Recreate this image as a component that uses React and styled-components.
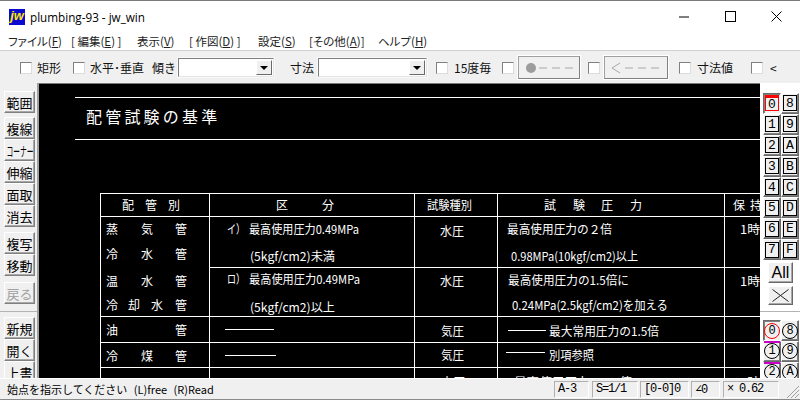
import styled, { createGlobalStyle } from 'styled-components'

const GlobalStyle = createGlobalStyle`
  html, body { margin: 0; padding: 0; background: #f0f0f0; }
  * { box-sizing: border-box; }
`

const UI_FONT = `'Noto Sans CJK JP', 'Noto Sans', sans-serif`

const menus = [
  ['ファイル(', 'F', ')', 63],
  ['[ 編集(', 'E', ') ]', 66],
  ['表示(', 'V', ')', 52],
  ['[ 作図(', 'D', ') ]', 69],
  ['設定(', 'S', ')', 51],
  ['[その他(', 'A', ')]', 69],
  ['ヘルプ(', 'H', ')', 50],
]

const leftGroups = [
  { gap: 4, items: ['範囲'] },
  { gap: 5, items: ['複線', 'コーナー', '伸縮', '面取', '消去'] },
  { gap: 6, items: ['複写', '移動'] },
  { gap: 7, items: [{ label: '戻る', off: true }] },
]

const layerRows = [['0', '8'], ['1', '9'], ['2', 'A'], ['3', 'B'], ['4', 'C'], ['5', 'D'], ['6', 'E'], ['7', 'F']]
const groupRows = [['0', '8'], ['1', '9'], ['2', 'A']]

const statusCells = [
  ['A-3', 35, 0],
  ['S=1/1', 46, 3],
  ['[0-0]0', 49, 2],
  ['∠0', 29, 2],
  ['× 0.62', 56, 3],
]

// drawing data, page coordinates
const hLines = [
  [75, 760, 97], [75, 760, 139],
  [100, 760, 193], [100, 760, 216], [209, 760, 267], [100, 760, 316], [100, 760, 342], [100, 760, 367],
  [225, 274, 329], [225, 276, 355], [508, 546, 330], [506, 545, 352],
]
const vLines = [100, 209, 414, 497, 724]

const labels = [
  [122, 205, '配'], [145, 205, '管'], [168, 205, '別'],
  [106, 229, '蒸'], [141, 229, '気'], [175, 229, '管'],
  [106, 254, '冷'], [141, 254, '水'], [175, 254, '管'],
  [106, 281, '温'], [141, 281, '水'], [175, 281, '管'],
  [106, 305, '冷'], [128, 305, '却'], [151, 305, '水'], [175, 305, '管'],
  [106, 330, '油'], [175, 330, '管'],
  [106, 356, '冷'], [141, 356, '煤'], [175, 356, '管'],
  [276, 205, '区'], [322, 205, '分'],
  [227, 229, 'イ）', 18], [249, 229, '最高使用圧力0.49MPa', 110],
  [250, 256, '(5kgf/cm2)未満', 85],
  [227, 279, 'ロ）', 18], [249, 279, '最高使用圧力0.49MPa', 111],
  [250, 307, '(5kgf/cm2)以上', 85],
  [427, 205, '試験種別', 45],
  [440, 231, '水圧', 24], [440, 281, '水圧', 24], [441, 331, '気圧', 23], [441, 355, '気圧', 23],
  [544, 205, '試'], [573, 205, '験'], [601, 205, '圧'], [630, 205, '力'],
  [507, 229, '最高使用圧力の２倍', 105],
  [511, 256, '0.98MPa(10kgf/cm2)以上', 127],
  [508, 280, '最高使用圧力の1.5倍に', 121],
  [512, 305, '0.24MPa(2.5kgf/cm2)を加える', 156],
  [549, 331, '最大常用圧力の1.5倍', 110],
  [549, 355, '別項参照', 45],
  [733, 205, '保'], [750, 205, '持'],
  [740, 229, '1時', 20], [740, 281, '1時', 20],
  [441, 382, '水圧', 24], [514, 382, '最高使用圧力の1.5倍', 118], [740, 382, '1時', 20],
]

const Window = styled.div`
  width: 800px;
  height: 400px;
  display: flex;
  flex-direction: column;
  overflow: hidden;
  background: #f0f0f0;
  border-top: 1px solid #7a7a7a;
  font-family: ${UI_FONT};
  color: #000;
`

const TitleBar = styled.div`
  height: 31px;
  flex: none;
  display: flex;
  align-items: center;
  padding: 0 1px 0 9px;
  background: #fff;
`

const AppIcon = styled.span`
  width: 16px;
  height: 16px;
  flex: none;
  margin-right: 5px;
  background: #0a0ad0;
  color: #ffe600;
  font: italic bold 13px/14px 'Liberation Sans', sans-serif;
  text-align: center;
`

const TitleText = styled.span`
  flex: 1;
  font: 11.7px 'Open Sans', sans-serif;
`

const WinButton = styled.span`
  width: 46px;
  height: 31px;
  display: flex;
  align-items: center;
  justify-content: center;
`

const MenuBar = styled.div`
  height: 19px;
  flex: none;
  display: flex;
  align-items: center;
  padding-left: 8px;
  background: #fff;
  border-bottom: 1px solid #d0d0d0;
`

const MenuItem = styled.span`
  width: ${({ $w }) => $w}px;
  flex: none;
  font-size: 11.5px;
  font-feature-settings: 'palt';
  white-space: nowrap;
  color: #222;
  u { text-underline-offset: 1px; }
`

const ToolBar = styled.div`
  height: 32px;
  flex: none;
  display: flex;
  align-items: center;
  padding: 1px 0 0 20px;
  background: #f0f0f0;
`

const Check = styled.span`
  width: 12px;
  height: 12px;
  flex: none;
  margin-left: ${({ $ml }) => $ml || 0}px;
  background: #fff;
  border: 1px solid;
  border-color: #808080 #dcdcdc #dcdcdc #808080;
`

const ToolLabel = styled.span`
  flex: none;
  width: ${({ $w }) => $w}px;
  margin-left: ${({ $ml }) => $ml || 0}px;
  font-size: 12px;
  line-height: 16px;
  white-space: nowrap;
  color: #111;
`

const Combo = styled.span`
  width: ${({ $w }) => $w}px;
  height: 19px;
  flex: none;
  margin-left: ${({ $ml }) => $ml || 0}px;
  display: flex;
  justify-content: flex-end;
  padding: 1px;
  background: #fff;
  border: 1px solid;
  border-color: #808080 #e4e4e4 #e4e4e4 #808080;
  outline: 1px solid #f8f8f8;
`

const ComboArrow = styled.span`
  width: 16px;
  display: flex;
  align-items: center;
  justify-content: center;
  background: #f0f0f0;
  border: 1px solid;
  border-color: #fff #696969 #696969 #fff;
  &::after {
    content: '';
    border: 4px solid transparent;
    border-top: 4px solid #000;
    border-bottom: 0;
  }
`

const LineButton = styled.span`
  width: ${({ $w }) => $w}px;
  height: 23px;
  flex: none;
  margin-left: ${({ $ml }) => $ml || 0}px;
  display: flex;
  align-items: center;
  padding-left: 6px;
  background: #f0f0f0;
  border: 1px solid;
  border-color: #a0a0a0 #808080 #808080 #a0a0a0;
  outline: 1px solid #fff;
`

const Body = styled.div`
  height: 295px;
  flex: none;
  display: flex;
`

const LeftPanel = styled.div`
  width: 39px;
  flex: none;
  padding: 8px 0 0 4px;
  overflow: hidden;
  background: #f0f0f0;
  border-right: 2px solid #a0a0a0;
`

const ToolGroup = styled.div`
  display: flex;
  flex-direction: column;
  margin-bottom: ${({ $gap }) => $gap}px;
`

const Separator = styled.div`
  height: 1px;
  background: #b4b4b4;
  margin: ${({ $m }) => $m};
`

const SideButton = styled.span`
  width: 31px;
  height: 22px;
  flex: none;
  display: flex;
  align-items: center;
  justify-content: center;
  background: #f0f0f0;
  border: 1px solid;
  border-color: #fff #808080 #808080 #fff;
  box-shadow: inset -1px -1px 0 #a8a8a8;
  font-size: 13px;
  white-space: nowrap;
  color: ${({ $off }) => ($off ? '#a0a0a0' : '#000')};
`

const NarrowLabel = styled.span`
  display: inline-block;
  transform: scaleX(0.52);
`

const CanvasFrame = styled.div`
  width: 721px;
  flex: none;
  border-top: 1px solid #7a7a7a;
`

const Canvas = styled.svg`
  width: 721px;
  height: 294px;
  display: block;
  background: #000;
`

const DrawText = styled.text`
  font-family: ${UI_FONT};
  font-size: 12px;
  fill: #fff;
`

const TitleDrawText = styled(DrawText)`
  font-size: 16px;
  letter-spacing: 3.2px;
`

const RightPanel = styled.div`
  width: 40px;
  flex: none;
  padding: 10px 0 0 3px;
  overflow: hidden;
  background: #fff;
`

const LayerGrid = styled.div`
  display: grid;
  grid-template-columns: 18px 18px;
  grid-auto-rows: 20.9px;
`

const LayerCell = styled.span`
  position: relative;
  display: flex;
  align-items: center;
  justify-content: center;
  border: 1px solid;
  border-color: ${({ $on }) => ($on ? '#696969 #fff #fff #696969' : '#fff #696969 #696969 #fff')};
  box-shadow: ${({ $on }) => ($on ? 'inset 1px 1px 0 #808080' : 'inset -1px -1px 0 #808080')};
  background: #f0f0f0;
`

const LayerBox = styled.span`
  width: 14px;
  height: 16px;
  display: flex;
  align-items: center;
  justify-content: center;
  border: 1px solid ${({ $on }) => ($on ? '#f00' : '#000')};
  border-top: ${({ $on }) => ($on ? '3px solid #f00' : '1px solid #000')};
  font: 13px/1 'Liberation Mono', monospace;
`

const GroupCircle = styled.span`
  width: 16px;
  height: 16px;
  display: flex;
  align-items: center;
  justify-content: center;
  border: 1px solid ${({ $on }) => ($on ? '#f00' : '#000')};
  border-radius: 50%;
  font: 12px/1 'Liberation Mono', monospace;
`

const MagentaBar = styled.span`
  position: absolute;
  top: -1px;
  left: 0;
  right: 0;
  height: 2px;
  background: #c800c8;
`

const AllButton = styled.span`
  width: 25px;
  height: ${({ $h }) => $h}px;
  margin: ${({ $mt }) => $mt}px 0 0 5px;
  display: flex;
  align-items: center;
  justify-content: center;
  background: #f0f0f0;
  border: 1px solid;
  border-color: #fff #696969 #696969 #fff;
  box-shadow: inset -1px -1px 0 #a8a8a8;
  font: 16px 'Liberation Sans', sans-serif;
`

const StatusBar = styled.div`
  height: 22px;
  flex: none;
  display: flex;
  align-items: center;
  background: #f0f0f0;
  border-top: 1px solid #fff;
  border-bottom: 1px solid #8a8a8a;
  font-size: 11px;
`

const StatusText = styled.span`
  flex: 1;
  padding-left: 7px;
  white-space: nowrap;
  word-spacing: 4px;
`

const StatusCell = styled.span`
  width: ${({ $w }) => $w}px;
  height: 17px;
  flex: none;
  margin-left: ${({ $ml }) => $ml}px;
  padding-left: 3px;
  display: flex;
  align-items: center;
  border: 1px solid;
  border-color: #b0b0b0 #fff #fff #b0b0b0;
  font: 12px 'Liberation Mono', monospace;
  letter-spacing: -1.2px;
  white-space: nowrap;
`

const Grip = styled.svg`
  width: 21px;
  height: 18px;
  flex: none;
`

const DrawLabel = ({ x, y, text, w }) => (
  <DrawText x={x} y={y + 5} {...(w ? { textLength: w, lengthAdjust: 'spacingAndGlyphs' } : {})}>
    {text}
  </DrawText>
)

const App = () => (
  <Window>
    <GlobalStyle />
    <TitleBar>
      <AppIcon>jw</AppIcon>
      <TitleText>plumbing-93 - jw_win</TitleText>
      <WinButton>
        <svg width="10" height="10" viewBox="0 0 10 10"><path d="M0 5h10" stroke="#000" /></svg>
      </WinButton>
      <WinButton>
        <svg width="11" height="11" viewBox="0 0 11 11"><rect x=".5" y=".5" width="10" height="10" fill="none" stroke="#000" /></svg>
      </WinButton>
      <WinButton>
        <svg width="11" height="11" viewBox="0 0 11 11"><path d="M.5.5l10 10M10.5.5l-10 10" stroke="#000" /></svg>
      </WinButton>
    </TitleBar>

    <MenuBar>
      {menus.map(([before, key, after, w]) => (
        <MenuItem key={key} $w={w}>{before}<u>{key}</u>{after}</MenuItem>
      ))}
    </MenuBar>

    <ToolBar>
      <Check />
      <ToolLabel $ml={5} $w={36}>矩形</ToolLabel>
      <Check />
      <ToolLabel $ml={5} $w={62}>水平･垂直</ToolLabel>
      <ToolLabel $w={26}>傾き</ToolLabel>
      <Combo $w={96}><ComboArrow /></Combo>
      <ToolLabel $ml={16} $w={28}>寸法</ToolLabel>
      <Combo $w={109}><ComboArrow /></Combo>
      <Check $ml={9} />
      <ToolLabel $ml={6} $w={48}>15度毎</ToolLabel>
      <Check />
      <LineButton $ml={4} $w={62}>
        <svg width="50" height="12" viewBox="0 0 50 12">
          <circle cx="6" cy="6" r="5" fill="#9c9c9c" />
          <path d="M14 6h8M27 6h8M40 6h8" stroke="#a8a8a8" />
        </svg>
      </LineButton>
      <Check $ml={8} />
      <LineButton $ml={4} $w={64}>
        <svg width="50" height="12" viewBox="0 0 50 12">
          <path d="M9 1L1 6l8 5M14 6h8M27 6h8M40 6h8" fill="none" stroke="#a8a8a8" />
        </svg>
      </LineButton>
      <Check $ml={11} />
      <ToolLabel $ml={6} $w={54}>寸法値</ToolLabel>
      <Check />
      <ToolLabel $ml={7} $w={12}>&lt;</ToolLabel>
    </ToolBar>

    <Body>
      <LeftPanel>
        {leftGroups.map((group, i) => (
          <ToolGroup key={i} $gap={group.gap}>
            {group.items.map((item) => {
              const label = item.label || item
              return (
                <SideButton key={label} $off={item.off}>
                  {label === 'コーナー' ? <NarrowLabel>{label}</NarrowLabel> : label}
                </SideButton>
              )
            })}
          </ToolGroup>
        ))}
        <Separator $m="0 0 5px -4px" />
        <ToolGroup $gap={0}>
          <SideButton>新規</SideButton>
          <SideButton>開く</SideButton>
          <SideButton>上書</SideButton>
        </ToolGroup>
      </LeftPanel>

      <CanvasFrame>
        <Canvas viewBox="39 84 721 294">
          {hLines.map(([x1, x2, y]) => (
            <line key={`${x1}-${y}`} x1={x1} x2={x2} y1={y + 0.5} y2={y + 0.5} stroke="#fff" />
          ))}
          {vLines.map((x) => (
            <line key={x} x1={x + 0.5} x2={x + 0.5} y1={193} y2={378} stroke="#fff" />
          ))}
          <TitleDrawText x={86} y={123}>配管試験の基準</TitleDrawText>
          {labels.map(([x, y, text, w]) => (
            <DrawLabel key={`${x}-${y}`} x={x} y={y} text={text} w={w} />
          ))}
        </Canvas>
      </CanvasFrame>

      <RightPanel>
        <LayerGrid>
          {layerRows.map((row) => row.map((label) => (
            <LayerCell key={label} $on={label === '0'}>
              <LayerBox $on={label === '0'}>{label}</LayerBox>
            </LayerCell>
          )))}
        </LayerGrid>
        <AllButton $h={21} $mt={2}>All</AllButton>
        <AllButton $h={19} $mt={3}>
          <svg width="17" height="13" viewBox="0 0 17 13"><path d="M.5.5l16 12M16.5.5l-16 12" stroke="#222" /></svg>
        </AllButton>
        <Separator $m="6px 0 8px -3px" />
        <LayerGrid>
          {groupRows.map((row) => row.map((label) => (
            <LayerCell key={label} $on={label === '0'}>
              {(label === '1' || label === '2') && <MagentaBar />}
              <GroupCircle $on={label === '0'}>{label}</GroupCircle>
            </LayerCell>
          )))}
        </LayerGrid>
      </RightPanel>
    </Body>

    <StatusBar>
      <StatusText>始点を指示してください (L)free (R)Read</StatusText>
      {statusCells.map(([text, w, ml]) => (
        <StatusCell key={text} $w={w} $ml={ml}>{text}</StatusCell>
      ))}
      <Grip viewBox="0 0 21 18">
        <path d="M20 6L8 18M20 10l-8 8M20 14l-4 4" stroke="#a0a0a0" />
      </Grip>
    </StatusBar>
  </Window>
)

export default App
